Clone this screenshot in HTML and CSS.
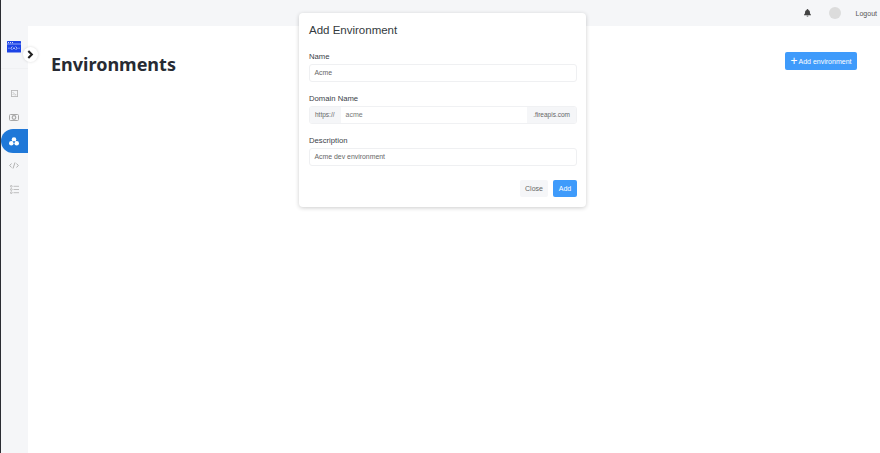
FILE: index.html
```html
<!DOCTYPE html>
<html lang="en">
<head>
<meta charset="utf-8">
<title>Environments</title>
<link rel="stylesheet" href="styles.css">
</head>
<body>
<div class="app">
  <aside class="sidebar">
    <div class="brand">
      <svg class="logo" viewBox="0 0 14 12" width="14" height="12">
        <rect width="14" height="11.500" rx=".5" fill="#1c43e6"/>
        <path d="M1 1.600h1M3 1.600h1M5 1.600h1" stroke="#e4e9ff" stroke-width="1"/>
        <path d="M0 3h14" stroke="#dfe5ff" stroke-width=".6"/>
        <path d="M5.300 5.500L3.800 7.200 5.300 8.900M8.700 5.500l1.500 1.700-1.500 1.700" stroke="#fff" stroke-width=".7" fill="none"/>
        <circle cx="7" cy="7.200" r=".8" fill="#fff"/>
        <path d="M1.200 7.200h1.500M11.300 7.200h1.500" stroke="#dfe5ff" stroke-width=".6"/>
      </svg>
    </div>
    <nav class="nav">
      <a class="nav-item">
        <svg viewBox="0 0 8 8" width="7" height="7" fill="none" stroke="#b8b8b8"><rect x=".5" y=".5" width="7" height="7"/><path d="M2 2.500L3.500 4 2 5.500M4 5.500h2"/></svg>
      </a>
      <a class="nav-item">
        <svg viewBox="0 0 10 7" width="10" height="7" fill="none" stroke="#a8a8a8"><rect x=".5" y=".5" width="9" height="6" rx="1"/><circle cx="5" cy="3.500" r="1.800" stroke-width="1.200"/></svg>
      </a>
      <a class="nav-item active">
        <svg viewBox="0 0 10 9" width="10" height="9" fill="#fff"><circle cx="5" cy="2.500" r="2.300"/><circle cx="2.300" cy="6.300" r="2.300"/><circle cx="7.700" cy="6.300" r="2.300"/><circle cx="5" cy="4.800" r=".8" fill="#1f78d8"/></svg>
      </a>
      <a class="nav-item">
        <svg viewBox="0 0 10 7" width="10" height="7" fill="none" stroke="#a8a8a8" stroke-width=".9"><path d="M2.500 1.500L.7 3.500l1.800 2M7.500 1.500l1.800 2-1.800 2M6 .5L4 6.500"/></svg>
      </a>
      <a class="nav-item">
        <svg viewBox="0 0 9 9" width="9" height="9" fill="none" stroke="#b0b0b0" stroke-width=".8"><circle cx="1.300" cy="1.300" r=".9"/><circle cx="1.300" cy="4.500" r=".9"/><circle cx="1.300" cy="7.700" r=".9"/><path d="M3.500 1.300H9M3.500 4.500H9M3.500 7.700H9"/></svg>
      </a>
    </nav>
  </aside>
  <div class="content">
    <header class="topbar">
      <svg class="bell" viewBox="0 0 8 9" width="7" height="8" fill="#444"><path d="M4 0a1 1 0 0 1 1 1c1.500.4 1.800 1.700 1.800 3 0 1.200.5 1.700 1.200 2.400V7H0v-.6C.7 5.700 1.200 5.200 1.200 4c0-1.300.3-2.600 1.800-3a1 1 0 0 1 1-1zM3 7.500h2a1 1 0 0 1-2 0z"/></svg>
      <span class="avatar"></span>
      <span class="logout">Logout</span>
    </header>
    <main class="main">
      <h1 class="page-title">Environments</h1>
      <button class="btn-add-env"><span class="plus">+</span>Add environment</button>
    </main>
  </div>
  <button class="toggle" aria-label="Expand">
    <svg viewBox="0 0 8 10" width="7" height="9" fill="none" stroke="#222" stroke-width="2.400"><path d="M1.500 1L5.500 5l-4 4"/></svg>
  </button>
  <section class="modal">
    <h2 class="modal-title">Add Environment</h2>
    <div class="field">
      <label class="label">Name</label>
      <div class="input">Acme</div>
    </div>
    <div class="field">
      <label class="label">Domain Name</label>
      <div class="group">
        <span class="addon addon-left">https://</span>
        <span class="group-input">acme</span>
        <span class="addon">.fireapis.com</span>
      </div>
    </div>
    <div class="field">
      <label class="label">Description</label>
      <div class="input">Acme dev environment</div>
    </div>
    <div class="actions">
      <button class="btn btn-close">Close</button>
      <button class="btn btn-primary">Add</button>
    </div>
  </section>
</div>
</body>
</html>
```
FILE: styles.css
```css
* { box-sizing: border-box; }
html, body { margin: 0; height: 100%; }
body { font-family: "Liberation Sans", Arial, sans-serif; background: #fff; overflow: hidden; }
.app { position: relative; display: flex; width: 880px; height: 453px; background: #f5f6f8; }
.sidebar { width: 28px; flex: none; background: #f5f6f8; border-left: 1px solid #2b2d33; }
.brand { height: 43px; margin-top: 26px; padding: 15px 0 0 6px; border-bottom: 1px solid #f0f1f3; }
.logo { display: block; }
.nav { display: flex; flex-direction: column; margin-top: 12px; }
.nav-item { height: 24px; display: flex; align-items: center; justify-content: center; padding-right: 1px; }
.nav-item.active { background: #1f78d8; border-radius: 12px 0 0 12px; }
.content { flex: 1; display: flex; flex-direction: column; min-width: 0; }
.topbar { height: 26px; flex: none; display: flex; align-items: center; justify-content: flex-end; padding-right: 3px; font-size: 7px; color: #555; }
.bell { margin-right: 18px; }
.avatar { width: 12px; height: 12px; border-radius: 50%; background: #dcdcdc; margin-right: 15px; }
.logout { font-size: 7px; color: #555; }
.main { flex: 1; background: #fff; display: flex; align-items: flex-start; justify-content: space-between; padding: 26px 23px 0 23px; }
.page-title { margin: 1px 0 0; font-family: "Noto Sans", sans-serif; font-weight: 700; font-size: 18px; line-height: 22px; color: #272b33; }
.btn-add-env { display: flex; align-items: center; justify-content: center; gap: 1px; width: 72px; height: 18px; border: 0; border-radius: 2px; background: #3f9bfb; color: #fff; font: 7px "Liberation Sans", sans-serif; padding: 0; }
.plus { font-size: 12px; line-height: 11px; }
.toggle { position: absolute; left: 23px; top: 47px; width: 15px; height: 15px; border: 0; border-radius: 50%; background: #fff; box-shadow: 0 0 3px rgba(0,0,0,.15); display: flex; align-items: center; justify-content: center; padding: 0; }
.modal { position: absolute; left: 299px; top: 13px; width: 287px; height: 194px; background: #fff; border-radius: 4px; box-shadow: 0 1px 4px rgba(0,0,0,.2); padding: 10px 9px 10px 10px; display: flex; flex-direction: column; }
.modal-title { margin: 0 0 14px; font-size: 11.500px; line-height: 14px; font-weight: 400; color: #333a40; }
.field { display: flex; flex-direction: column; gap: 2px; margin-bottom: 11px; }
.label { font-size: 7.700px; line-height: 11px; color: #3b4148; }
.input { height: 18px; border: 1px solid #eff0f2; border-radius: 3px; padding-left: 4.500px; font-size: 6.900px; line-height: 16px; color: #666; }
.group { display: flex; height: 18px; border: 1px solid #f0f1f3; border-radius: 3px; overflow: hidden; font-size: 7px; line-height: 16px; color: #666; }
.addon { background: #f5f6f8; padding: 0 6px; font-size: 6.500px; }
.addon-left { padding-left: 5px; }
.group-input { flex: 1; padding-left: 5px; color: #777; }
.actions { display: flex; justify-content: flex-end; gap: 5px; margin-top: 3px; }
.btn { height: 17px; border: 0; border-radius: 2px; font: 7px "Liberation Sans", sans-serif; padding: 0; }
.btn-close { width: 28px; background: #f5f6f8; color: #666; }
.btn-primary { width: 24px; background: #3f9bfb; color: #fff; }
```
